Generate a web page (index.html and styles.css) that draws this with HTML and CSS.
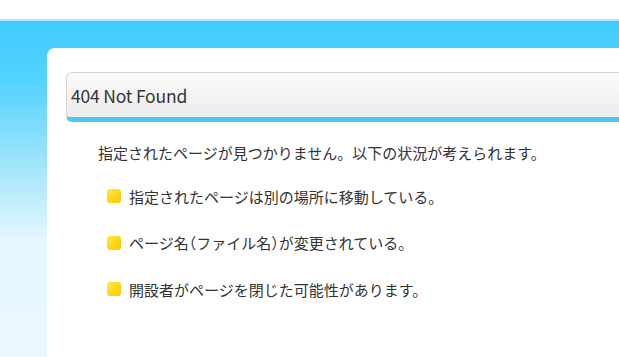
FILE: index.html
```html
<!DOCTYPE html>
<html lang="ja">
<head>
    <meta charset="UTF-8">
    <meta name="viewport" content="width=device-width, initial-scale=1.0">
    <title>404 Not Found</title>
    <link rel="stylesheet" href="styles.css">
</head>
<body>
    <div class="wrapper">
        <div class="content">
            <h1 class="page-title">404 Not Found</h1>
            <p class="lead">指定されたページが見つかりません。以下の状況が考えられます。</p>
            <ul class="reasons">
                <li>指定されたページは別の場所に移動している。</li>
                <li><span>ページ名<span class="half">（</span>ファイル名<span class="half">）</span>が変更されている。</span></li>
                <li>開設者がページを閉じた可能性があります。</li>
            </ul>
        </div>
    </div>
</body>
</html>
```

FILE: styles.css
```css
body {
    margin: 0;
    background-color: #fff;
    font-family: "Noto Sans CJK JP", sans-serif;
    color: #333;
    overflow: hidden;
}
.wrapper {
    box-sizing: border-box;
    height: 338px;
    margin-top: 19px;
    border-top: 2px solid #b4ebfb;
    padding: 27px 0 0 47px;
    background: linear-gradient(#3fccff 0, #54d2fe 60px, #a7e6fb 150px, #e6f7fe 220px, #eaf8fe 100%);
}
.content {
    box-sizing: border-box;
    height: 309px;
    padding: 24px 0 0 19px;
    background-color: #fff;
    border-top-left-radius: 8px;
}
.page-title {
    margin: 0;
    height: 44px;
    line-height: 46px;
    padding-left: 4px;
    font-size: 17.5px;
    font-weight: normal;
    letter-spacing: -0.2px;
    color: #333;
    border: 1px solid #d3d3d3;
    border-right: none;
    border-bottom: 5px solid #4ec7ee;
    border-radius: 6px 0 0 6px;
    background: linear-gradient(#fbfbfb, #ececec);
}
.lead {
    margin: 21px 0 0 32px;
    font-size: 15px;
    line-height: 20px;
}
.reasons {
    list-style: none;
    margin: 23px 0 0 41px;
    padding: 0;
    font-size: 15px;
}
.reasons li {
    display: flex;
    align-items: center;
    gap: 8px;
    height: 20px;
    margin-bottom: 26.5px;
}
.reasons li::before {
    content: "";
    width: 14px;
    height: 14px;
    border-radius: 3px;
    background: linear-gradient(135deg, #ffea3a, #ffc400);
}
.half {
    font-feature-settings: "halt";
}
```
